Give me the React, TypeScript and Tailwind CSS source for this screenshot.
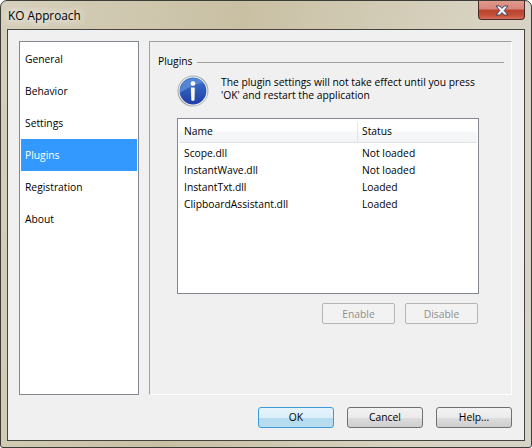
const FONT = "font-['Open_Sans','Noto_Sans',sans-serif]";

const NAV = ["General", "Behavior", "Settings", "Plugins", "Registration", "About"];

const PLUGINS = [
  { name: "Scope.dll", status: "Not loaded" },
  { name: "InstantWave.dll", status: "Not loaded" },
  { name: "InstantTxt.dll", status: "Loaded" },
  { name: "ClipboardAssistant.dll", status: "Loaded" },
];

function InfoIcon() {
  return (
    <svg width="32" height="32" viewBox="0 0 32 32" className="shrink-0">
      <defs>
        <linearGradient id="ring" x1="0" y1="0" x2="1" y2="1">
          <stop offset="0" stopColor="#c4c8cc" />
          <stop offset="0.5" stopColor="#8d9296" />
          <stop offset="1" stopColor="#d4d7da" />
        </linearGradient>
        <linearGradient id="disk" x1="0" y1="0" x2="0" y2="1">
          <stop offset="0" stopColor="#3f74c8" />
          <stop offset="1" stopColor="#1d3ea6" />
        </linearGradient>
        <linearGradient id="stem" x1="0" y1="0" x2="1" y2="0">
          <stop offset="0" stopColor="#e8eaee" />
          <stop offset="0.6" stopColor="#ffffff" />
          <stop offset="1" stopColor="#9aa4b8" />
        </linearGradient>
      </defs>
      <circle cx="16" cy="16" r="15.5" fill="url(#ring)" />
      <circle cx="16" cy="16" r="14.4" fill="#f2f3f4" />
      <circle cx="16" cy="16" r="13.4" fill="url(#disk)" />
      <path d="M3 18 A13.4 13.4 0 0 1 26 7.4 Q14 10 3 18 Z" fill="#5f8fd8" opacity="0.75" />
      <circle cx="16" cy="8.6" r="2.4" fill="#ffffff" />
      <path d="M13.8 12.5 H18.2 L17.7 25.2 Q16 26.4 14.3 25.2 Z" fill="url(#stem)" />
    </svg>
  );
}

function CloseGlyph() {
  return (
    <svg width="14" height="11" viewBox="0 0 14 11">
      <path
        d="M1 1 H4.8 L7 3.4 L9.2 1 H13 L9.2 5.5 L13 10 H9.2 L7 7.6 L4.8 10 H1 L4.8 5.5 Z"
        fill="#f4f5fa"
        stroke="#3d4560"
        strokeWidth="1"
      />
    </svg>
  );
}

function SmallButton({ label }: { label: string }) {
  return (
    <button className="w-[73px] h-[21px] pt-px rounded-[2px] border border-[#b5b5b5] bg-[#f2f2f2] text-[#8f8f8f] text-[10.3px] leading-none">
      {label}
    </button>
  );
}

function DialogButton({ label, primary }: { label: string; primary?: boolean }) {
  return (
    <button
      className={
        primary
          ? "w-[76px] h-[21px] rounded-[3px] border border-[#3c9ad8] bg-[linear-gradient(#e6f4fb_0%,#dceff9_50%,#b4dcf0_52%,#b8deef_100%)] text-black text-[10.3px] leading-none"
          : "w-[76px] h-[21px] rounded-[3px] border border-[#707070] bg-[linear-gradient(#f2f2f2_0%,#ebebeb_50%,#dddddd_52%,#cfcfcf_100%)] text-black text-[10.3px] leading-none"
      }
    >
      {label}
    </button>
  );
}

export default function App() {
  return (
    <div
      className={`${FONT} w-[532px] h-[448px] flex flex-col overflow-hidden rounded-t-[7px] rounded-b-[3px] border border-[#3e3c36] bg-[linear-gradient(100deg,#d6d0bc_0%,#c9c0a4_40%,#d8d3c2_80%,#d6d3c8_100%)] text-[10.3px] text-black`}
    >
      {/* title bar */}
      <div className="h-[28px] flex items-start justify-between pl-[7px] pr-[6px]">
        <span className="mt-[6px] text-[11.8px] leading-[17px] [text-shadow:0_0_8px_#ffffff,0_0_8px_#ffffff]">KO Approach</span>
        <div className="w-[47px] h-[19px] flex items-center justify-center rounded-b-[4px] border border-t-0 border-[#4a2a26] bg-[linear-gradient(#e09a8c_0%,#d8847a_45%,#b8422c_50%,#c4503a_80%,#d8705c_100%)]">
          <CloseGlyph />
        </div>
      </div>

      {/* client area */}
      <div className="mx-[6px] w-[518px] h-[412px] border border-[#45443e] bg-[#f0f0f0] pt-[11px] pl-[11px] flex flex-col">
        <div className="flex gap-[10px]">
          {/* sidebar */}
          <div className="w-[120px] h-[354px] border border-[#828790] bg-white p-px flex flex-col">
            {NAV.map((item) => (
              <div
                key={item}
                className={
                  item === "Plugins"
                    ? "h-[32px] flex items-center pl-[4px] pt-px bg-[#3399ff] text-white"
                    : "h-[32px] flex items-center pl-[4px] pt-px"
                }
              >
                {item}
              </div>
            ))}
          </div>

          {/* plugins page */}
          <div className="w-[363px] h-[354px] border border-t-[#a0a0a0] border-l-[#a0a0a0] border-r-white border-b-white pl-[8px] pr-[7px] pt-[11px] flex flex-col">
            <div className="flex items-center h-[18px]">
              <span className="w-[39px]">Plugins</span>
              <div className="flex-1 h-px bg-[#a0a0a0]" />
            </div>
            <div className="mt-[4px] ml-[19px] flex gap-[12px]">
              <InfoIcon />
              <div className="leading-[13px] pt-px whitespace-nowrap">
                The plugin settings will not take effect until you press
                <br />
                'OK' and restart the application
              </div>
            </div>

            {/* list */}
            <div className="mt-[11px] ml-[19px] w-[302px] h-[176px] border border-[#828790] bg-white p-px">
              <div className="flex h-[23px] pt-[2px] border-b border-[#e3e3e3] bg-[linear-gradient(#ffffff_0%,#ffffff_50%,#f6f7f9_55%,#f3f4f6_100%)]">
                <div className="w-[179px] pl-[5px] flex items-center border-r border-[#e3e5e8]">Name</div>
                <div className="flex-1 pl-[4px] flex items-center">Status</div>
              </div>
              <div className="pt-[2px]">
                {PLUGINS.map((p) => (
                  <div key={p.name} className="flex h-[17px] items-center">
                    <div className="w-[179px] pl-[5px]">{p.name}</div>
                    <div className="pl-[4px]">{p.status}</div>
                  </div>
                ))}
              </div>
            </div>

            <div className="mt-[9px] ml-[164px] flex gap-[10px]">
              <SmallButton label="Enable" />
              <SmallButton label="Disable" />
            </div>
          </div>
        </div>

        {/* dialog buttons */}
        <div className="mt-[12px] ml-[239px] flex gap-[13px]">
          <DialogButton label="OK" primary />
          <DialogButton label="Cancel" />
          <DialogButton label="Help..." />
        </div>
      </div>
    </div>
  );
}
